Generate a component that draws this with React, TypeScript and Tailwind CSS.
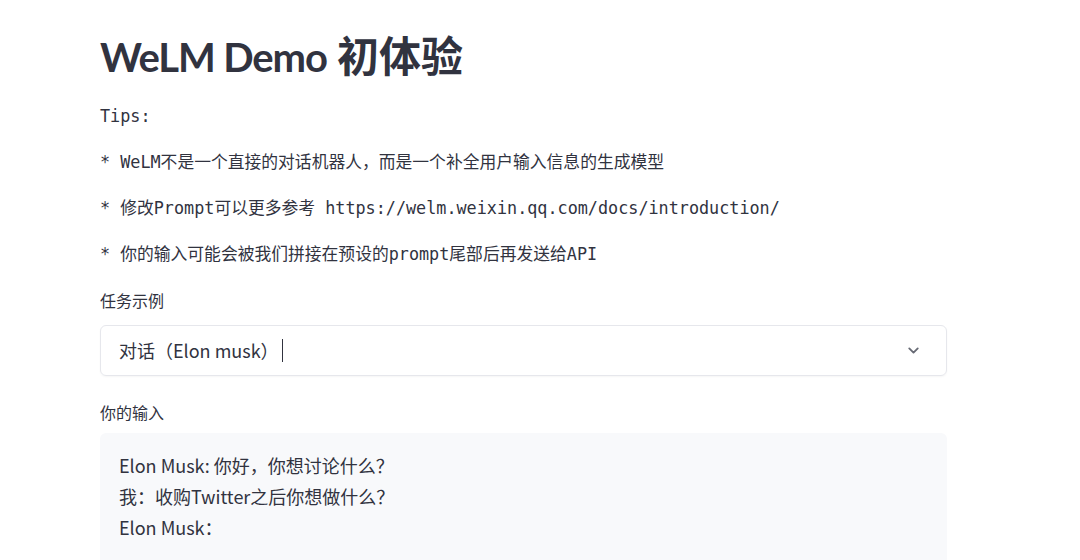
import { ChevronDown } from "lucide-react";

const tips = [
	"Tips:",
	"* WeLM不是一个直接的对话机器人，而是一个补全用户输入信息的生成模型",
	"* 修改Prompt可以更多参考 https://welm.weixin.qq.com/docs/introduction/",
	"* 你的输入可能会被我们拼接在预设的prompt尾部后再发送给API",
];

// Noto Sans CJK carries Source Sans style latin, close to Streamlit's look
const sans = "font-['Noto_Sans_CJK_SC','Noto_Sans',sans-serif]";

export default function App() {
	return (
		<div className={`min-h-[560px] bg-white text-[#31333f] ${sans}`}>
			<div className="w-[847px] ml-[100px]">
				<h1 className="pt-[33px] text-[40px] leading-[42px] font-bold flex items-baseline">
					<span className="font-['Lato',sans-serif] tracking-[-1.1px]">WeLM Demo</span>
					<span className="ml-[10px] text-[42px] font-['Noto_Sans_CJK_SC',sans-serif]">初体验</span>
				</h1>

				<div className="mt-[15px] font-['DejaVu_Sans_Mono','Noto_Sans_CJK_SC',monospace] text-[16.8px]">
					{tips.map((t) => (
						<p key={t} className="leading-[46px] whitespace-pre">
							{t}
						</p>
					))}
				</div>

				<label className="block mt-[11px] text-[16px] leading-[24px]">任务示例</label>
				<div className="mt-[13px] h-[51px] flex items-center justify-between rounded-md border border-[#e6e7ec] pl-[18px] pr-[24px] shadow-[0_1px_2px_rgba(0,0,0,0.04)]">
					<div className="flex items-center text-[18px]">
						<span>对话（Elon musk）</span>
						<span className="ml-[3px] w-[1.5px] h-[23px] bg-[#31333f]" />
					</div>
					<ChevronDown size={17} strokeWidth={2.6} className="text-[#676a74]" />
				</div>

				<label className="block mt-[24px] text-[16px] leading-[24px]">你的输入</label>
				<div className="mt-[9px] h-[150px] rounded-md bg-[#f8f9fb] pl-[19px] pt-[17px] text-[18px] leading-[31px]">
					<p>Elon Musk: 你好，你想讨论什么？</p>
					<p>我：收购Twitter之后你想做什么？</p>
					<p>Elon Musk：</p>
				</div>
			</div>
		</div>
	);
}
